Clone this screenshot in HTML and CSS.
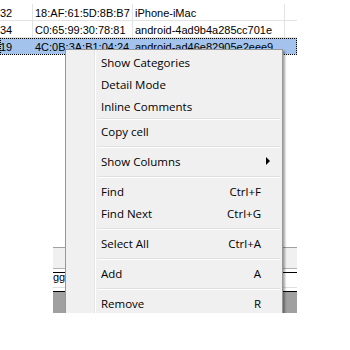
FILE: index.html
```html
<!DOCTYPE html>
<html lang="en">
<head>
<meta charset="UTF-8" />
<title>Device list with context menu</title>
<link rel="stylesheet" href="styles.css">
</head>
<body>

<div class="screen">
  <div class="grid">
    <div class="row">
      <div class="cell c-id">32</div>
      <div class="cell c-mac">18:AF:61:5D:8B:B7</div>
      <div class="cell c-name">iPhone-iMac</div>
      <div class="cell c-pad"></div>
    </div>
    <div class="row">
      <div class="cell c-id">34</div>
      <div class="cell c-mac">C0:65:99:30:78:81</div>
      <div class="cell c-name">android-4ad9b4a285cc701e</div>
      <div class="cell c-pad"></div>
    </div>
    <div class="row selected">
      <div class="cell c-id">19</div>
      <div class="cell c-mac">4C:0B:3A:B1:04:24</div>
      <div class="cell c-name">android-ad46e82905e2eee9</div>
      <div class="cell c-pad"></div>
    </div>
  </div>

  <div class="panel">
    <div class="panel-band"></div>
    <div class="panel-field"><span>gg</span></div>
    <div class="panel-work"></div>
  </div>

  <div class="menu">
    <div class="item">Show Categories</div>
    <div class="item">Detail Mode</div>
    <div class="item">Inline Comments</div>
    <div class="sep tight"></div>
    <div class="item">Copy cell</div>
    <div class="sep"></div>
    <div class="item">Show Columns<span class="arrow"></span></div>
    <div class="sep"></div>
    <div class="item">Find<span class="key">Ctrl+F</span></div>
    <div class="item">Find Next<span class="key">Ctrl+G</span></div>
    <div class="sep"></div>
    <div class="item">Select All<span class="key">Ctrl+A</span></div>
    <div class="sep"></div>
    <div class="item">Add<span class="key">A</span></div>
    <div class="sep"></div>
    <div class="item">Remove<span class="key">R</span></div>
  </div>
</div>

</body>
</html>
```

FILE: styles.css
```css
body {
  margin: 0;
  background: #fff;
  font-family: "Liberation Sans", Arial, sans-serif;
}
.screen {
  position: relative;
  width: 297px;
  height: 313px;
  overflow: hidden;
}
.grid {
  display: flex;
  flex-direction: column;
  padding-top: 4px;
  height: 243px;
}
.row {
  display: grid;
  grid-template-columns: 33px 100px 152px 12px;
  height: 16px;
  border-bottom: 1px solid #e3e3e3;
  font-size: 11px;
  line-height: 16px;
  color: #000;
}
.cell {
  border-right: 1px solid #e3e3e3;
  padding: 1px 0 0 2px;
  white-space: nowrap;
  overflow: hidden;
}
.c-id {
  padding-left: 0;
}
.c-pad {
  border-right: none;
}
.row.selected {
  background: #a3c3ec;
  outline: 1px dotted #000;
  outline-offset: -1px;
}
.row.selected .cell {
  border-right-color: transparent;
}
.panel {
  margin-left: 53px;
  border-top: 1px solid #a0a0a0;
  display: flex;
  flex-direction: column;
}
.panel-band {
  height: 20px;
  background: #f0f0f0;
  border-bottom: 1px solid #b4b4b4;
  margin-bottom: 3px;
}
.panel-field {
  height: 18px;
  background: #fff;
  border-top: 1px solid #000;
  border-bottom: 1px solid #000;
  box-shadow: inset 0 -3px 0 #fff, inset 0 -4px 0 #e0e0e0;
  font-size: 11px;
  line-height: 8px;
  overflow: hidden;
}
.panel-work {
  height: 30px;
  background: #a0a0a0;
}
.menu {
  position: absolute;
  left: 65px;
  top: 49px;
  width: 212px;
  padding: 1px 2px 2px;
  background: #f0f0f0 linear-gradient(to right, transparent 28px, #e2e3e3 28px, #e2e3e3 29px, #fff 29px, #fff 30px, transparent 30px);
  border: 1px solid #979797;
  box-shadow: 2px 2px 2px rgba(0, 0, 0, 0.35);
  font-family: "Open Sans", "Noto Sans", sans-serif;
  font-size: 11.5px;
  color: #000;
}
.item {
  display: flex;
  align-items: center;
  justify-content: space-between;
  height: 22px;
  padding: 0 19px 0 33px;
}
.key {
  text-align: right;
}
.arrow {
  width: 0;
  height: 0;
  margin-right: -9px;
  border-top: 4px solid transparent;
  border-bottom: 4px solid transparent;
  border-left: 4px solid #000;
}
.sep {
  height: 8px;
  margin-left: 29px;
  padding-top: 4px;
  box-sizing: border-box;
}
.sep.tight {
  height: 3px;
  padding-top: 1px;
}
.sep::before {
  content: "";
  display: block;
  height: 1px;
  background: #e0e0e0;
  border-bottom: 1px solid #fff;
}
```
